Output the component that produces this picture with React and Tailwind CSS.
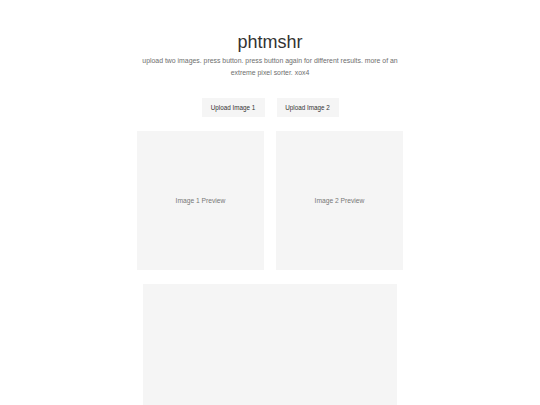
import React from 'react';

const App = () => {
    return (
        <div className="min-h-screen bg-white flex flex-col items-center pt-[32px] font-['Liberation_Sans',Arial,sans-serif]">
            {/* 标题 */}
            <h1 className="text-[18px] leading-[20px] text-[#333333]">phtmshr</h1>
            <p className="mt-[3px] w-[262px] text-center text-[6.9px] leading-[12px] text-[#6e6e6e]">
                upload two images. press button. press button again for different results. more of an extreme pixel sorter. xox4
            </p>

            {/* 上传按钮 */}
            <div className="mt-[19px] flex gap-[12px]">
                <button className="w-[63px] h-[19px] bg-[#f5f5f5] text-[6.3px] text-[#333333]">Upload Image 1</button>
                <button className="w-[62px] h-[19px] bg-[#f5f5f5] text-[6.3px] text-[#333333]">Upload Image 2</button>
            </div>

            {/* 预览 */}
            <div className="mt-[14px] flex gap-[12px]">
                <div className="w-[127px] h-[139px] bg-[#f5f5f5] flex items-center justify-center pt-[2px] text-[6.7px] text-[#777777]">Image 1 Preview</div>
                <div className="w-[127px] h-[139px] bg-[#f5f5f5] flex items-center justify-center pt-[2px] text-[6.7px] text-[#777777]">Image 2 Preview</div>
            </div>

            {/* 结果 */}
            <div className="mt-[14px] w-[254px] h-[121px] bg-[#f5f5f5]"></div>
        </div>
    );
};

export default App;
